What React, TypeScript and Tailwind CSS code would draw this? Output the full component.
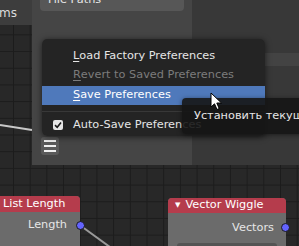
import React from "react";

const font = { fontFamily: '"DejaVu Sans", "Noto Sans", sans-serif' };

function Socket({ className }: { className: string }) {
  return (
    <div
      className={`absolute w-[9px] h-[9px] rounded-full bg-[#6363ff] border border-[#1a1a1a] ${className}`}
    />
  );
}

function MenuItem({
  label,
  hot,
  disabled,
  active,
}: {
  label: string;
  hot: string;
  disabled?: boolean;
  active?: boolean;
}) {
  const rest = label.slice(1);
  return (
    <div
      className={`h-[19px] flex items-center pl-[31px] ${active ? "bg-[#4f79bb] text-white" : ""} ${
        disabled ? "text-[#7c7c7c]" : "text-[#e6e6e6]"
      }`}
    >
      <span className="underline underline-offset-2 decoration-1">{hot}</span>
      <span>{rest}</span>
    </div>
  );
}

export default function App() {
  return (
    <div
      className="relative w-[299px] h-[246px] overflow-hidden text-[11.3px] bg-[#282828] bg-[linear-gradient(to_right,#1c1c1c_1px,transparent_1px),linear-gradient(to_bottom,#1c1c1c_1px,transparent_1px)] bg-[size:16.7px_16.7px] bg-[position:13px_1px]"
      style={font}
    >
      {/* editor header strip */}
      <div className="absolute left-0 top-0 w-[32px] h-[25px] bg-[#3d3d3d] flex items-center text-[#dcdcdc] text-[12px]">
        <span className="-ml-[1px]">ms</span>
      </div>

      {/* links */}
      <svg className="absolute inset-0" width="299" height="246">
        <path d="M0 125 L32 130" stroke="#c8c8c8" strokeWidth="2" fill="none" />
        <path d="M81 226 L114 250" stroke="#9a9a9a" strokeWidth="2" fill="none" />
      </svg>

      {/* List Length node */}
      <div className="absolute left-[-20px] top-[196px] w-[100px] h-[60px] rounded-t-[4px] overflow-hidden bg-[#6b6b6b]">
        <div className="h-[16px] bg-[#b53c4c] text-white pl-[23px] flex items-center">List Length</div>
        <div className="h-[26px] flex items-center justify-end pr-[13px] text-[#e6e6e6]">Length</div>
      </div>
      <Socket className="left-[76px] top-[221px]" />

      {/* Vector Wiggle node */}
      <div className="absolute left-[168px] top-[198px] w-[118px] h-[60px] rounded-t-[4px] overflow-hidden bg-[#6b6b6b]">
        <div className="h-[15px] bg-[#b53c4c] text-white flex items-center pl-[7px] gap-[5px]">
          <span className="text-[7px]">▼</span>
          <span>Vector Wiggle</span>
        </div>
        <div className="h-[30px] flex items-center justify-end pr-[12px] text-[#e6e6e6]">Vectors</div>
        <div className="mx-[9px] h-[10px] rounded-[3px] bg-[#545454]" />
      </div>
      <Socket className="left-[281px] top-[223px]" />

      {/* preferences window */}
      <div className="absolute left-[32px] top-0 w-[267px] h-[165px] flex">
        <div className="w-[160px] bg-[#454545] px-[8px]">
          <div className="-mt-[11px] h-[22px] rounded-[4px] bg-[#575757] text-[#e6e6e6] flex items-center pl-[8px]">
            File Paths
          </div>
        </div>
        <div className="flex-1 bg-[#383838] pt-[53px]">
          <div className="h-[13px] bg-[#434343] flex items-center pl-[23px] text-[#444] font-bold">NDOF</div>
        </div>
      </div>

      {/* hamburger button */}
      <div className="absolute left-[41px] top-[137px] w-[18px] h-[18px] rounded-[3px] bg-[#5a5a5a] flex flex-col items-center justify-center gap-[3px]">
        <div className="w-[12px] h-[2px] bg-[#f0f0f0]" />
        <div className="w-[12px] h-[2px] bg-[#f0f0f0]" />
        <div className="w-[12px] h-[2px] bg-[#f0f0f0]" />
      </div>

      {/* menu */}
      <div className="absolute left-[42px] top-[39px] w-[223px] h-[97px] rounded-[5px] bg-[#232323]/95 shadow-[0_1px_6px_rgba(0,0,0,0.6)] pt-[8px] overflow-hidden">
        <MenuItem hot="L" label="Load Factory Preferences" />
        <MenuItem hot="R" label="Revert to Saved Preferences" disabled />
        <div className="mt-[1px]">
          <MenuItem hot="S" label="Save Preferences" active />
        </div>
        <div className="mt-[6px] h-[1px] bg-[#383838]" />
        <div className="h-[26px] flex items-center pl-[11px] text-[#e6e6e6] gap-[10px]">
          <div className="w-[10px] h-[10px] rounded-[2px] bg-[#e6e6e6] flex items-center justify-center">
            <svg width="8" height="8" viewBox="0 0 8 8">
              <path d="M1 4.2 L3.2 6.3 L7 1.6" stroke="#1a1a1a" strokeWidth="1.6" fill="none" />
            </svg>
          </div>
          <span>Auto-Save Preferences</span>
        </div>
      </div>

      {/* tooltip */}
      <div className="absolute left-[182px] top-[98px] w-[140px] h-[36px] rounded-[4px] bg-[#151515]/90 shadow-[0_1px_5px_rgba(0,0,0,0.5)] flex items-center pl-[12px] text-[#e6e6e6] whitespace-nowrap">
        Установить текущие настройки
      </div>

      {/* cursor */}
      <svg className="absolute left-[210px] top-[92px]" width="14" height="20" viewBox="0 0 14 20">
        <path
          d="M1 1 L1 15 L4.5 11.8 L7 17.5 L9.2 16.5 L6.8 11 L11.5 11 Z"
          fill="#ffffff"
          stroke="#000000"
          strokeWidth="1"
          strokeLinejoin="round"
        />
      </svg>
    </div>
  );
}
